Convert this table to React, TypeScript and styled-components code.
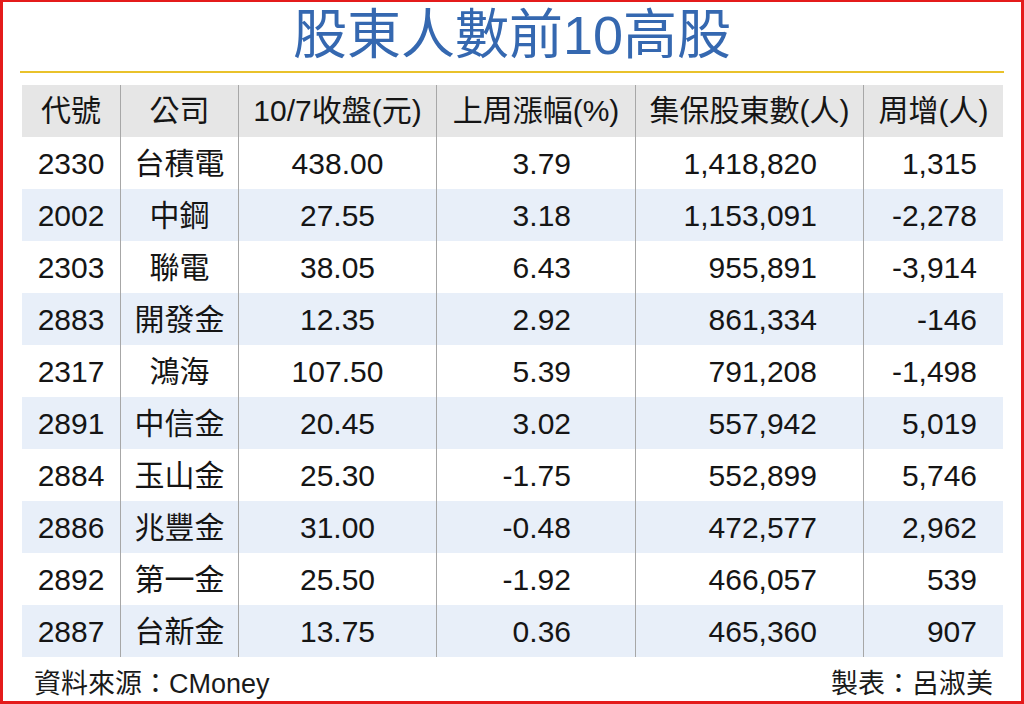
import React from "react";
import styled, { createGlobalStyle } from "styled-components";

const GlobalStyle = createGlobalStyle`
  html, body {
    margin: 0;
    padding: 0;
    background: #fff;
  }
`;

const Frame = styled.div`
  width: 1024px;
  height: 704px;
  box-sizing: border-box;
  border: 3px solid #e41b1b;
  border-top-width: 2px;
  background: #fff;
  display: flex;
  flex-direction: column;
  font-family: "Liberation Sans", "Noto Sans CJK TC", sans-serif;
  color: #151515;
`;

const Title = styled.h1`
  margin: 0;
  height: 72px;
  display: flex;
  align-items: flex-start;
  justify-content: center;
  padding-top: 0;
  box-sizing: border-box;
  font-size: 54px;
  line-height: 66px;
  font-weight: 400;
  color: #3568b0;
`;

const Rule = styled.div`
  height: 2px;
  margin: 0 17px 0 17px;
  background: #e9c22b;
`;

const Table = styled.div`
  margin: 12px 17px 0 19px;
  display: grid;
  grid-template-columns: 99px 118px 198px 199px 228px 139px;
  grid-auto-rows: 52px;
`;

const Cell = styled.div<{ $align: string; $pad: number; $bg: string; $last?: boolean }>`
  display: flex;
  align-items: center;
  justify-content: ${(p) => p.$align};
  padding-right: ${(p) => p.$pad}px;
  padding-top: 2px;
  background: ${(p) => p.$bg};
  border-right: ${(p) => (p.$last ? "none" : "1px solid #a7a7a7")};
  font-size: 30px;
  white-space: nowrap;
  line-height: 1;
`;

const HeadCell = styled(Cell)`
  font-size: 30px;
  padding-top: 0;
`;

const Footer = styled.div`
  display: flex;
  justify-content: space-between;
  align-items: center;
  padding: 5px 28px 0 31px;
  font-size: 27px;
  color: #1a1a1a;
`;

const headers = ["代號", "公司", "10/7收盤(元)", "上周漲幅(%)", "集保股東數(人)", "周增(人)"];

const rows = [
  ["2330", "台積電", "438.00", "3.79", "1,418,820", "1,315"],
  ["2002", "中鋼", "27.55", "3.18", "1,153,091", "-2,278"],
  ["2303", "聯電", "38.05", "6.43", "955,891", "-3,914"],
  ["2883", "開發金", "12.35", "2.92", "861,334", "-146"],
  ["2317", "鴻海", "107.50", "5.39", "791,208", "-1,498"],
  ["2891", "中信金", "20.45", "3.02", "557,942", "5,019"],
  ["2884", "玉山金", "25.30", "-1.75", "552,899", "5,746"],
  ["2886", "兆豐金", "31.00", "-0.48", "472,577", "2,962"],
  ["2892", "第一金", "25.50", "-1.92", "466,057", "539"],
  ["2887", "台新金", "13.75", "0.36", "465,360", "907"],
];

// alignment and right padding per column
const cols = [
  { align: "center", pad: 0 },
  { align: "center", pad: 0 },
  { align: "center", pad: 0 },
  { align: "flex-end", pad: 64 },
  { align: "flex-end", pad: 46 },
  { align: "flex-end", pad: 26 },
];

const App: React.FC = () => {
  return (
    <>
      <GlobalStyle />
      <Frame>
        <Title>股東人數前10高股</Title>
        <Rule />
        <Table>
          {headers.map((h, i) => (
            <HeadCell key={h} $align="center" $pad={0} $bg="#e6e6e6" $last={i === 5}>
              {h}
            </HeadCell>
          ))}
          {rows.map((row, r) =>
            row.map((v, i) => (
              <Cell
                key={`${r}-${i}`}
                $align={cols[i].align}
                $pad={cols[i].pad}
                $bg={r % 2 === 1 ? "#e8eff9" : "#ffffff"}
                $last={i === 5}
              >
                {v}
              </Cell>
            ))
          )}
        </Table>
        <Footer>
          <span>資料來源：CMoney</span>
          <span>製表：呂淑美</span>
        </Footer>
      </Frame>
    </>
  );
};

export default App;
